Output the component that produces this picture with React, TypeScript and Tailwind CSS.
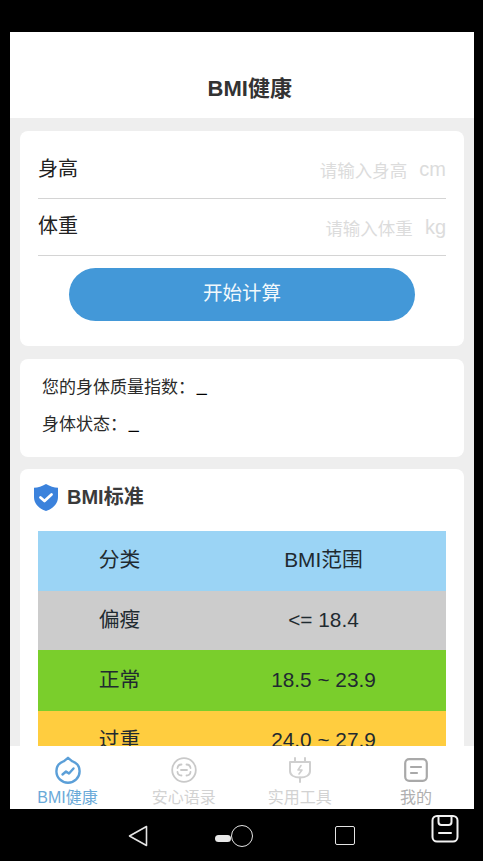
const ranges = [
  { name: "分类", range: "BMI范围", bg: "bg-[#9bd4f5]", h: "h-[60px]" },
  { name: "偏瘦", range: "<= 18.4", bg: "bg-[#cccccc]", h: "h-[59px]" },
  { name: "正常", range: "18.5 ~ 23.9", bg: "bg-[#7ace2c]", h: "h-[61px]" },
  { name: "过重", range: "24.0 ~ 27.9", bg: "bg-[#ffcd3f]", h: "h-[60px]" },
];

function ShieldIcon() {
  return (
    <svg width="26" height="29" viewBox="0 0 26 29">
      <path d="M13 1 C9 3.5 5 4.6 1 4.8 V14 C1 21 6 25.6 13 28 C20 25.6 25 21 25 14 V4.8 C21 4.6 17 3.5 13 1 Z" fill="#3b82dc" />
      <path d="M7.5 14.5 L11.5 18 L18.5 11.5" fill="none" stroke="#fff" strokeWidth="2.8" strokeLinecap="round" strokeLinejoin="round" />
    </svg>
  );
}

function HealthIcon() {
  return (
    <svg width="26" height="28" viewBox="0 0 26 28" fill="none" stroke="#5b9fd8" strokeWidth="2.4" strokeLinecap="round" strokeLinejoin="round">
      <path d="M13 1.8 L17 5.2 C21.8 6.8 24.6 10.6 24.6 15.2 C24.6 21.8 19.4 26.8 13 26.8 C6.6 26.8 1.4 21.8 1.4 15.2 C1.4 10.6 4.2 6.8 9 5.2 Z" />
      <path d="M7.5 18.5 L11 15.5 L14 17.5 L18.5 12.5" />
    </svg>
  );
}

function FaceIcon() {
  return (
    <svg width="26" height="26" viewBox="0 0 26 26" fill="none" stroke="#c9c9c9" strokeWidth="1.8" strokeLinecap="round">
      <circle cx="13" cy="13" r="11.8" />
      <path d="M6.5 11 C6.8 8.5 8.5 7.5 10.5 7.5" />
      <path d="M15.5 7.5 C17.5 7.5 19.2 8.5 19.5 11" />
      <path d="M6.5 15 C6.8 17.5 8.5 18.5 10.5 18.5" />
      <path d="M15.5 18.5 C17.5 18.5 19.2 17.5 19.5 15" />
      <path d="M10 13 H16" />
    </svg>
  );
}

function PlugIcon() {
  return (
    <svg width="24" height="26" viewBox="0 0 24 26" fill="none" stroke="#cfcfcf" strokeWidth="2" strokeLinecap="round" strokeLinejoin="round">
      <path d="M7 1 V5 M17 1 V5" />
      <path d="M2 5 H22 V14 C22 18 18 20.5 12 20.5 C6 20.5 2 18 2 14 Z" />
      <path d="M12 20.5 V25" />
      <path d="M13 8.5 L10 13 H14 L11 17" strokeWidth="1.6" />
    </svg>
  );
}

function MineIcon() {
  return (
    <svg width="24" height="24" viewBox="0 0 24 24" fill="none" stroke="#a9a9a9" strokeWidth="2.2" strokeLinecap="round">
      <rect x="1.2" y="1.2" width="21.6" height="21.6" rx="4" />
      <path d="M7 9 H17 M7 15 H13" />
    </svg>
  );
}

const tabs = [
  { label: "BMI健康", icon: <HealthIcon />, color: "text-[#6aa9d8]" },
  { label: "安心语录", icon: <FaceIcon />, color: "text-[#d2d2d2]" },
  { label: "实用工具", icon: <PlugIcon />, color: "text-[#d2d2d2]" },
  { label: "我的", icon: <MineIcon />, color: "text-[#b0b0b0]" },
];

export default function App() {
  return (
    <div className='relative w-[483px] h-[861px] overflow-hidden bg-black flex flex-col [font-family:"Liberation_Sans","Noto_Sans_CJK_SC",sans-serif]'>
      <div className="h-[32px] shrink-0" />

      <div className="ml-[9.5px] w-[464.5px] h-[777px] shrink-0 bg-white flex flex-col overflow-hidden">
        {/* 顶部标题 */}
        <div className="h-[86px] shrink-0 flex items-end justify-center pb-[14px] pl-[16px]">
          <h1 className="text-[22px] leading-[30px] font-bold text-[#333]">BMI健康</h1>
        </div>

        {/* 内容区 */}
        <div className="flex-1 min-h-0 overflow-hidden bg-[#eeeeee] pl-[10.5px] pr-[10px] pt-[13px] flex flex-col gap-[13px]">
          <div className="h-[215px] shrink-0 bg-white rounded-[8px] px-[18px] flex flex-col">
            <div className="h-[68px] flex items-end justify-between border-b border-[#d4d4d4] pb-[14px]">
              <span className="text-[20px] leading-[30px] text-[#222]">身高</span>
              <div className="flex items-baseline gap-[12px] text-[#dcdcdc]">
                <span className="text-[17.5px] leading-[26px]">请输入身高</span>
                <span className="text-[20px] leading-[26px] -translate-y-[1px]">cm</span>
              </div>
            </div>
            <div className="h-[57px] flex items-end justify-between border-b border-[#d4d4d4] pb-[14px]">
              <span className="text-[20px] leading-[30px] text-[#222]">体重</span>
              <div className="flex items-baseline gap-[12px] text-[#dcdcdc] translate-y-[1px]">
                <span className="text-[17.5px] leading-[26px]">请输入体重</span>
                <span className="text-[20px] leading-[26px] -translate-y-[1px]">kg</span>
              </div>
            </div>
            <button className="mt-[12px] mx-auto w-[346px] h-[53px] pb-[2px] rounded-full bg-[#4398d8] text-[19.5px] text-[#f2f8fc]">
              开始计算
            </button>
          </div>

          <div className="h-[98px] shrink-0 bg-white rounded-[8px] px-[22px] pt-[16px] flex flex-col gap-[12px] text-[17px] leading-[25px] text-[#2a2a2a]">
            <p>您的身体质量指数：<b className="ml-[2px] text-black [-webkit-text-stroke:0.6px_black]">_</b></p>
            <p>身体状态：<b className="ml-[2px] text-black [-webkit-text-stroke:0.6px_black]">_</b></p>
          </div>

          <div className="flex-1 -mt-[1px] bg-white rounded-t-[8px] px-[18px]">
            <div className="h-[62px] flex items-center gap-[8px] -ml-[5px] pb-[6px]">
              <ShieldIcon />
              <span className="text-[20px] font-bold text-[#3a3a3a]">BMI标准</span>
            </div>
            <div className="flex flex-col">
              {ranges.map((r) => (
                <div key={r.name} className={`grid grid-cols-[163px_1fr] items-center text-center text-[20.8px] pb-[2px] text-[#1f2a30] ${r.bg} ${r.h}`}>
                  <span>{r.name}</span>
                  <span>{r.range}</span>
                </div>
              ))}
            </div>
          </div>
        </div>

        {/* 底部导航 */}
        <div className="h-[63px] shrink-0 bg-white grid grid-cols-4">
          {tabs.map((t) => (
            <div key={t.label} className="flex flex-col items-center pt-[10px]">
              <div className="h-[28px] flex items-center justify-center">{t.icon}</div>
              <span className={`mt-[2px] text-[16px] leading-[24px] ${t.color}`}>{t.label}</span>
            </div>
          ))}
        </div>
      </div>

      {/* 系统导航栏 */}
      <div className="flex-1 flex items-center pl-[128px] pt-[1px]">
        <svg width="20" height="22" viewBox="0 0 20 22" fill="none" stroke="#e4e4e4" strokeWidth="1.6" strokeLinejoin="round">
          <path d="M18.5 1.5 V20.5 L1.5 11 Z" />
        </svg>
        <div className="ml-[67px] w-[16px] h-[7px] rounded-full bg-[#e8e8e8] mt-[5px]" />
        <div className="w-[22px] h-[22px] rounded-full border-[1.6px] border-[#e4e4e4]" />
        <div className="ml-[82px] w-[20px] h-[19px] rounded-[2px] border-[1.6px] border-[#e4e4e4]" />
      </div>

      {/* 悬浮按钮 */}
      <svg className="absolute left-[431px] top-[815px]" width="28" height="28" viewBox="0 0 28 28" fill="none" stroke="#f2f2f2" strokeWidth="2" strokeLinecap="round">
        <rect x="1.5" y="1" width="25" height="25.5" rx="4.5" />
        <path d="M7.5 1 V7 C7.5 9 9 10 10.5 10 H17.5 C19 10 20.5 9 20.5 7 V1" />
        <path d="M8 18 H20" />
      </svg>
    </div>
  );
}
